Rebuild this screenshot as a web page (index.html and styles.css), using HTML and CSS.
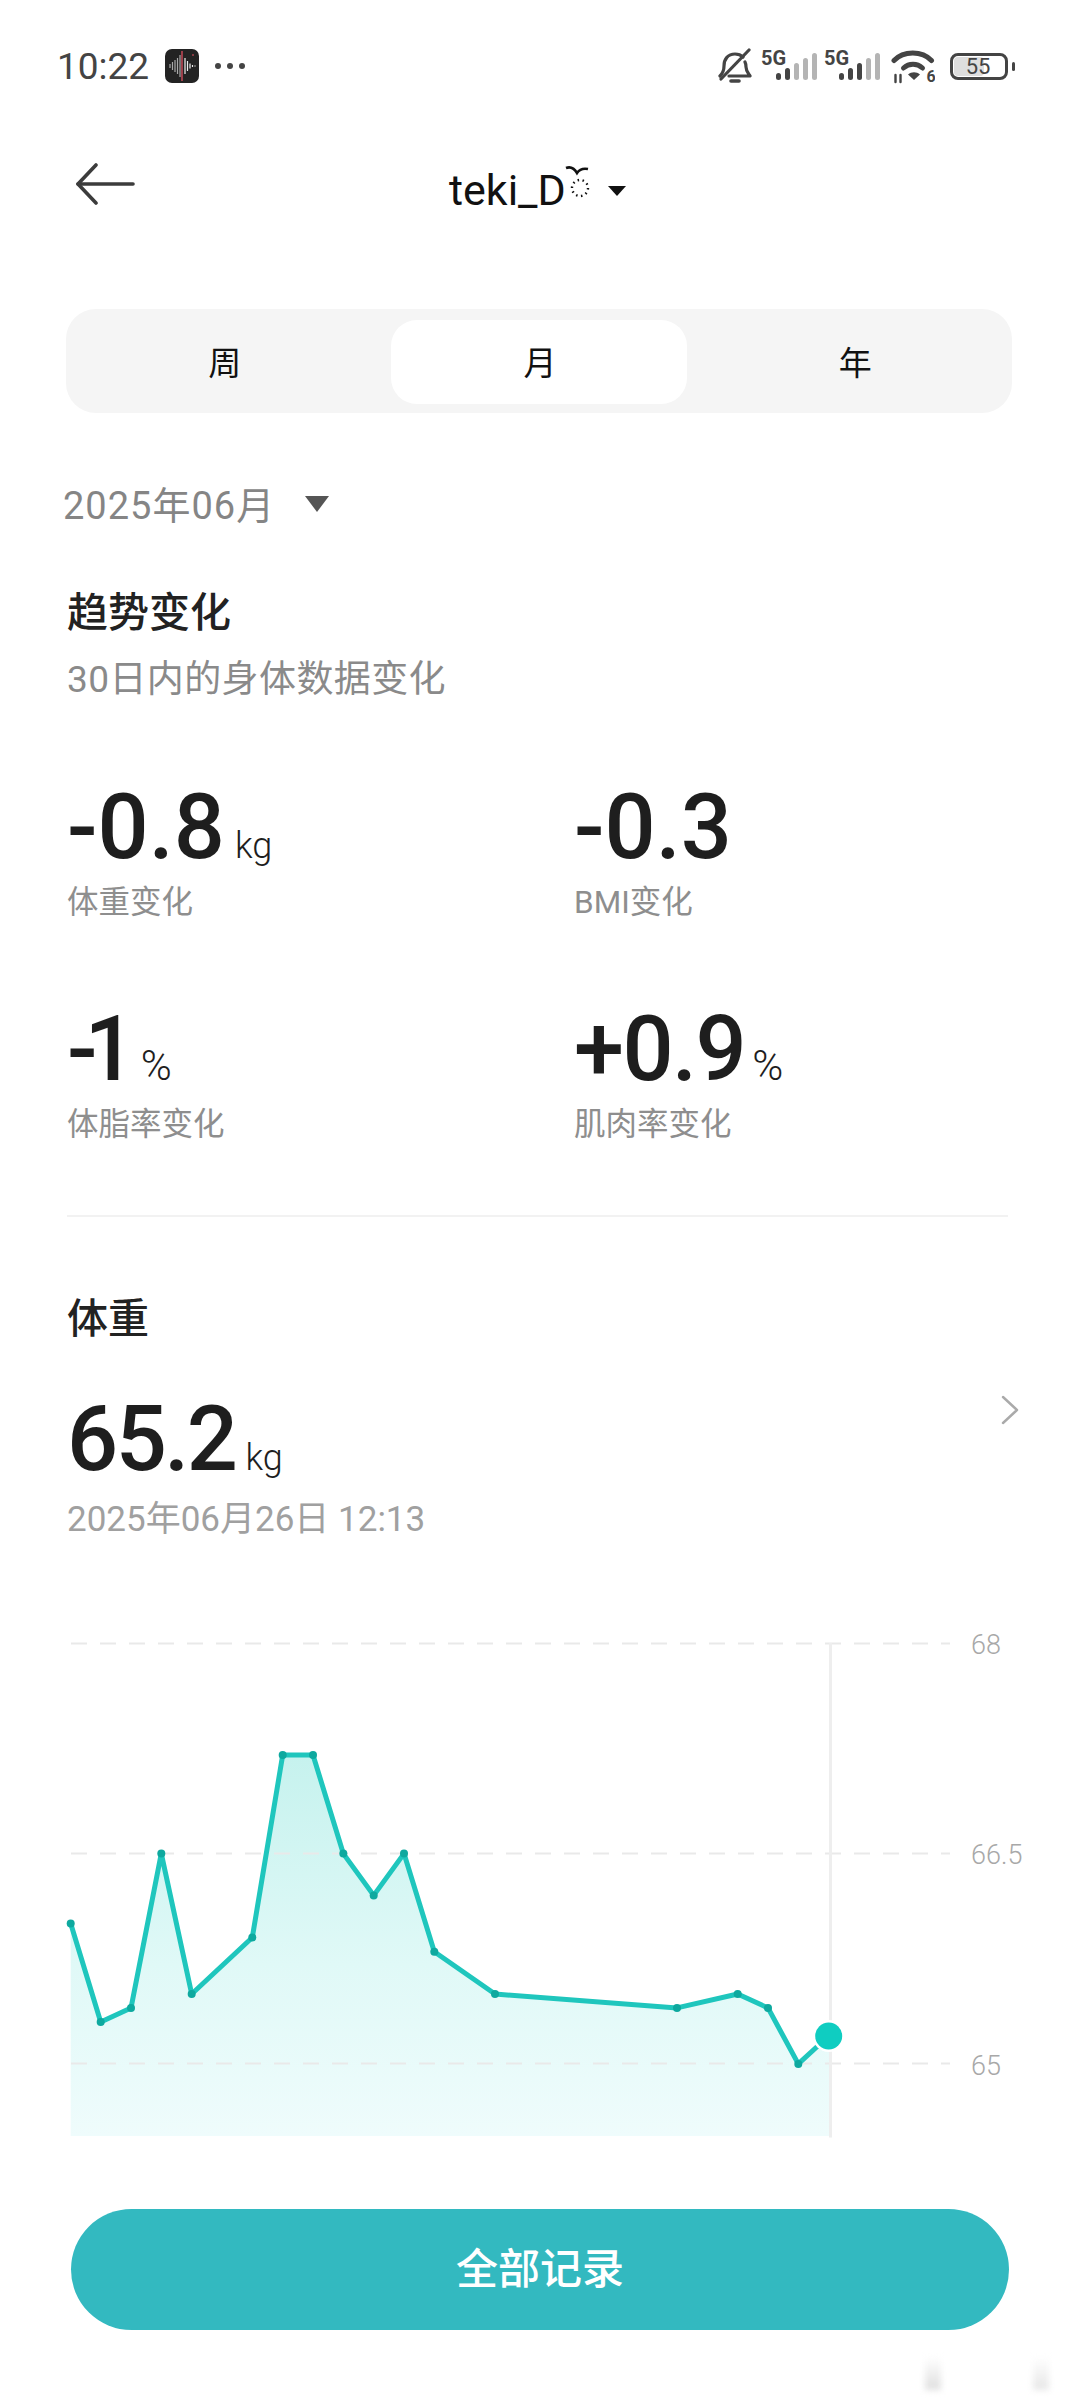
FILE: index.html
```html
<!DOCTYPE html>
<html lang="zh-CN">
  <head>
    <meta charset="UTF-8" />
    <meta name="viewport" content="width=device-width, initial-scale=1.0" />
    <title>体重趋势</title>
    <link rel="stylesheet" href="styles.css">
  </head>
  <body>
    <div id="status-bar">
      <span class="clock">10:22</span>
      <svg class="app-icon" width="34" height="34" viewBox="0 0 34 34">
        <rect width="34" height="34" rx="7" fill="#232323" />
        <g stroke="#a9a9a9" stroke-width="1.2">
          <path d="M5 15v4M7.500 13v8M10 11v12M12.500 9v16M15 6v22" />
        </g>
        <path d="M17 2v30" stroke="#9c3f4a" stroke-width="2" />
        <g stroke="#eee" stroke-width="1.2">
          <path d="M20 9v16M22.500 12v10M25 14.500v5M27.500 16v2M30 16.500v1" />
        </g>
        <circle cx="28" cy="6" r="1" fill="#a8434d" />
      </svg>
      <svg class="more-dots" width="32" height="8" viewBox="0 0 32 8">
        <circle cx="4" cy="4" r="3" fill="#444" />
        <circle cx="16" cy="4" r="3" fill="#444" />
        <circle cx="28" cy="4" r="3" fill="#444" />
      </svg>
      <div class="status-right">
        <svg width="34" height="36" viewBox="0 0 34 36" fill="none" stroke="#444" stroke-width="3.200" stroke-linecap="round" stroke-linejoin="round">
          <path d="M2 28c3-3 4-5 4-10 0-7 4-12 11-12 3 0 6 1 8 3" />
          <path d="M27 14c1 2 1 3 1 5 0 4 2 6 4 9H11" />
          <path d="M3 31 31 2" />
          <path d="M13 33h8" stroke-width="3.600" />
        </svg>
        <div class="net">
          <span class="net-label">5G</span>
          <div class="bars">
            <i class="bar h1 on"></i><i class="bar h2 on"></i><i class="bar h3"></i><i class="bar h4"></i><i class="bar h5"></i>
          </div>
        </div>
        <div class="net">
          <span class="net-label">5G</span>
          <div class="bars">
            <i class="bar h1 on"></i><i class="bar h2 on"></i><i class="bar h3 on"></i><i class="bar h4"></i><i class="bar h5"></i>
          </div>
        </div>
        <svg class="wifi" width="44" height="38" viewBox="0 0 44 38" fill="none" stroke="#444" stroke-width="5" stroke-linecap="round">
          <path d="M3 11.500C12.500 1.500 31 1.500 40.500 11.500" />
          <path d="M12.500 19c5.500-5 13.500-5 19 0" />
          <path d="M23 31l-6-5.500c3.500-3 8.500-3 12 0z" fill="#444" stroke="none" />
          <path d="M4.500 26v7M9.500 26v7" stroke-width="2.400" />
          <text x="35.500" y="33" class="wifi-six">6</text>
        </svg>
        <div class="battery">
          <div class="battery-body">
            <div class="battery-fill"></div>
            <span class="battery-num">55</span>
          </div>
          <div class="battery-cap"></div>
        </div>
      </div>
    </div>

    <div id="nav">
      <svg class="back" width="60" height="42" viewBox="0 0 60 42" fill="none" stroke="#3c3c3c" stroke-width="3.600" stroke-linecap="round" stroke-linejoin="round">
        <path d="M58 21H3" />
        <path d="M21 2 3 21l18 19" />
      </svg>
      <div class="user">
        <span class="user-name">teki_D</span>
        <svg class="user-mark" width="26" height="36" viewBox="0 0 26 36" fill="none" stroke="#111">
          <path d="M1 3c5-2 8 0 11 5 2-3 6-5 11-4" stroke-width="2.600" />
          <circle cx="15" cy="23" r="8" stroke-width="2.400" stroke-dasharray="1.500 3.500" />
        </svg>
        <i class="caret caret-small"></i>
      </div>
    </div>

    <div id="tabs">
      <div class="tab">周</div>
      <div class="tab active">月</div>
      <div class="tab">年</div>
    </div>

    <div id="date-select">
      <span>2025年06月</span>
      <i class="caret caret-gray"></i>
    </div>

    <div id="trend">
      <h2 class="section-title">趋势变化</h2>
      <p class="section-sub">30日内的身体数据变化</p>
      <div class="metrics">
        <div class="metric">
          <div class="value">-0.8<span class="unit">kg</span></div>
          <div class="label">体重变化</div>
        </div>
        <div class="metric">
          <div class="value">-0.3</div>
          <div class="label">BMI变化</div>
        </div>
        <div class="metric">
          <div class="value tight">-1<span class="unit percent">%</span></div>
          <div class="label">体脂率变化</div>
        </div>
        <div class="metric">
          <div class="value plus">+0.9<span class="unit percent">%</span></div>
          <div class="label">肌肉率变化</div>
        </div>
      </div>
    </div>

    <div id="weight">
      <h2 class="section-title">体重</h2>
      <div class="weight-row">
        <div class="value snug">65.2<span class="unit">kg</span></div>
        <svg class="chevron" width="18" height="30" viewBox="0 0 18 30" fill="none" stroke="#aaa" stroke-width="2.400" stroke-linecap="round" stroke-linejoin="round">
          <path d="M2 2l14 13L2 28" />
        </svg>
      </div>
      <div class="weight-date">2025年06月26日 12:13</div>
    </div>

    <svg id="chart" width="1080" height="525" viewBox="0 1620 1080 525">
      <defs>
        <linearGradient id="area" x1="0" y1="1755" x2="0" y2="2136" gradientUnits="userSpaceOnUse">
          <stop offset="0" stop-color="#c6f2ee" />
          <stop offset="0.55" stop-color="#e0f9f7" />
          <stop offset="1" stop-color="#effcfc" />
        </linearGradient>
      </defs>
      <path fill="url(#area)" d="M70.700 1923.600 100.700 2022 131 2007.900 161.300 1853.600 191.700 1994 252.300 1937.500 282.700 1755 313 1755 343.300 1853.600 373.700 1895.400 404 1853.600 434.300 1951.800 495 1994 677 2007.900 737.700 1994 768 2007.900 798.300 2063.900 828.700 2036 830 2036V2136H70.700Z" />
      <g class="grid">
        <path d="M71 1643.600H950" />
        <path d="M71 1853.600H950" />
        <path d="M71 2063.600H950" />
      </g>
      <path class="cursor" d="M830.500 1643V2137.500" />
      <polyline class="line" points="70.700,1923.600 100.700,2022 131,2007.900 161.300,1853.600 191.700,1994 252.300,1937.500 282.700,1755 313,1755 343.300,1853.600 373.700,1895.400 404,1853.600 434.300,1951.800 495,1994 677,2007.900 737.700,1994 768,2007.900 798.300,2063.900 828.700,2036" />
      <g class="points">
        <circle cx="70.700" cy="1923.600" r="4" />
        <circle cx="100.700" cy="2022" r="4" />
        <circle cx="131" cy="2007.900" r="4" />
        <circle cx="161.300" cy="1853.600" r="4" />
        <circle cx="191.700" cy="1994" r="4" />
        <circle cx="252.300" cy="1937.500" r="4" />
        <circle cx="282.700" cy="1755" r="4" />
        <circle cx="313" cy="1755" r="4" />
        <circle cx="343.300" cy="1853.600" r="4" />
        <circle cx="373.700" cy="1895.400" r="4" />
        <circle cx="404" cy="1853.600" r="4" />
        <circle cx="434.300" cy="1951.800" r="4" />
        <circle cx="495" cy="1994" r="4" />
        <circle cx="677" cy="2007.900" r="4" />
        <circle cx="737.700" cy="1994" r="4" />
        <circle cx="768" cy="2007.900" r="4" />
        <circle cx="798.300" cy="2063.900" r="4" />
      </g>
      <circle cx="828.700" cy="2036" r="16" fill="#fff" />
      <circle cx="828.700" cy="2036" r="13.500" fill="#0fcdc1" />
      <text class="axis" x="971" y="1653.500">68</text>
      <text class="axis" x="971" y="1864">66.5</text>
      <text class="axis" x="971" y="2075">65</text>
    </svg>

    <div id="all-records">全部记录</div>
    <div class="smudge smudge-a"></div>
    <div class="smudge smudge-b"></div>
  </body>
</html>
```
FILE: styles.css
```css
* {
  box-sizing: border-box;
}
body {
  position: relative;
  font-family: Roboto, "Noto Sans CJK SC", sans-serif;
  background-color: #fff;
  color: #222;
  margin: 0;
  width: 1080px;
  height: 2400px;
  overflow: hidden;
}
#status-bar {
  display: flex;
  align-items: center;
  height: 34px;
  margin-top: 49px;
  padding: 0 65px 0 57px;
}
.clock {
  font-size: 37px;
  color: #444;
  width: 108px;
}
.app-icon {
  margin-right: 15px;
}
.status-right {
  display: flex;
  align-items: center;
  margin-left: auto;
}
.net {
  position: relative;
  width: 62px;
  height: 34px;
  margin-left: 9px;
}
.net + .net {
  margin-left: 1px;
}
.net-label {
  position: absolute;
  left: 0;
  top: -3px;
  font-size: 20px;
  font-weight: 700;
  color: #444;
}
.bars {
  position: absolute;
  right: 6px;
  bottom: 3px;
  display: flex;
  align-items: flex-end;
  gap: 4px;
}
.bar {
  width: 5px;
  background: #b4b4b4;
  border-radius: 2.5px;
}
.bar.on {
  background: #444;
}
.h1 { height: 7px; }
.h2 { height: 12px; }
.h3 { height: 17px; }
.h4 { height: 22px; }
.h5 { height: 27px; }
.wifi {
  margin-left: 5px;
  margin-top: 4px;
}
.wifi-six {
  font-family: Roboto, sans-serif;
  font-size: 16px;
  font-weight: 700;
  fill: #444;
  stroke: none;
}
.battery {
  display: flex;
  align-items: center;
  margin-left: 15px;
}
.battery-body {
  position: relative;
  width: 58px;
  height: 27px;
  border: 3px solid #444;
  border-radius: 8px;
  display: flex;
  align-items: center;
  justify-content: center;
}
.battery-fill {
  position: absolute;
  left: 1px;
  top: 1px;
  bottom: 1px;
  width: 30px;
  background: #dedede;
  border-radius: 4px;
}
.battery-num {
  position: relative;
  font-size: 22px;
  color: #444;
  margin-right: 2px;
}
.battery-cap {
  width: 3px;
  height: 9px;
  background: #444;
  border-radius: 2px;
  margin-left: 4px;
}
#nav {
  position: relative;
  height: 70px;
  margin-top: 73px;
}
.back {
  position: absolute;
  left: 75px;
  top: 7px;
}
.user {
  display: flex;
  align-items: flex-start;
  padding-left: 449px;
}
.user-name {
  font-size: 43px;
  line-height: 49px;
  margin-top: 10px;
  color: #111;
}
.user-mark {
  margin-top: 9px;
  margin-left: -1px;
}
.caret {
  display: block;
  width: 0;
  height: 0;
  border-style: solid;
  border-color: #111 transparent transparent;
}
.caret-small {
  border-width: 10px 9.500px 0;
  margin: 30px 0 0 17px;
}
.caret-gray {
  border-width: 16px 12.500px 0;
  border-top-color: #555;
}
#tabs {
  display: grid;
  grid-template-columns: repeat(3, 1fr);
  height: 104px;
  margin: 83px 68px 0 66px;
  background: #f5f5f5;
  border-radius: 30px;
  padding: 11px 0 9px;
}
.tab {
  display: flex;
  align-items: center;
  justify-content: center;
  font-size: 33px;
  color: #111;
  padding: 0 0 2px 2px;
}
.tab.active {
  background: #fff;
  border-radius: 26px;
  margin: 0 10px;
}
#date-select {
  display: flex;
  align-items: center;
  gap: 30px;
  margin: 64px 0 2px 63px;
  height: 50px;
  font-size: 38px;
  letter-spacing: 1px;
  color: #858585;
}
#date-select .caret {
  margin-top: 3px;
}
#trend {
  margin: 0 72px 0 67px;
  padding-top: 56px;
  border-bottom: 2px solid #f2f2f2;
  height: 688px;
}
.section-title {
  font-size: 41px;
  line-height: 56px;
  font-weight: 500;
  margin: 0;
  color: #222;
}
.section-sub {
  font-size: 37px;
  line-height: 50px;
  letter-spacing: 0.4px;
  margin: 14px 0 0;
  color: #8a8a8a;
}
.metrics {
  display: grid;
  grid-template-columns: 507px 1fr;
  grid-auto-rows: 222px;
  margin-top: 78px;
}
.value {
  font-size: 90px;
  line-height: 90px;
  font-weight: 500;
  color: #1e1e1e;
}
.tight {
  letter-spacing: -13px;
}
.plus {
  letter-spacing: -1.5px;
}
.snug {
  letter-spacing: -2.5px;
}
.unit {
  font-size: 36px;
  line-height: 1;
  font-weight: 300;
  letter-spacing: 0;
  margin-left: 10px;
}
.percent {
  font-size: 42px;
  margin-left: 7px;
}
.tight .percent {
  margin-left: 18px;
}
.label {
  font-size: 31.5px;
  line-height: 46px;
  margin-top: 7px;
  color: #8e8e8e;
}
#weight {
  margin: 74px 61px 0 67px;
}
.weight-row {
  display: flex;
  justify-content: space-between;
  align-items: flex-start;
  margin-top: 48px;
}
.weight-date {
  font-size: 35px;
  line-height: 50px;
  margin-top: 10px;
  color: #a0a0a0;
}
#chart {
  display: block;
  margin-top: 75px;
}
.grid path {
  stroke: #e9e9e9;
  stroke-width: 2;
  stroke-dasharray: 16 13;
  fill: none;
}
.cursor {
  stroke: #eeeeee;
  stroke-width: 3;
  fill: none;
}
.line {
  fill: none;
  stroke: #1fc6bd;
  stroke-width: 5;
  stroke-linejoin: round;
}
.points circle {
  fill: #0ea99f;
}
.axis {
  font-family: Roboto, sans-serif;
  font-size: 27px;
  font-weight: 300;
  fill: #a8a8a8;
}
#all-records {
  display: flex;
  align-items: center;
  justify-content: center;
  height: 121px;
  margin: 64px 71px 0 71px;
  padding-bottom: 8px;
  background: #33b9c0;
  border-radius: 60.500px;
  color: #fff;
  font-size: 42px;
  font-weight: 500;
}
.smudge {
  position: absolute;
  top: 2357px;
  width: 16px;
  height: 33px;
  background: linear-gradient(to bottom, #fff, #dedede);
  filter: blur(3px);
}
.smudge-a {
  left: 925px;
}
.smudge-b {
  left: 1033px;
  background: linear-gradient(to bottom, #fff, #e6e6e6);
}
```
